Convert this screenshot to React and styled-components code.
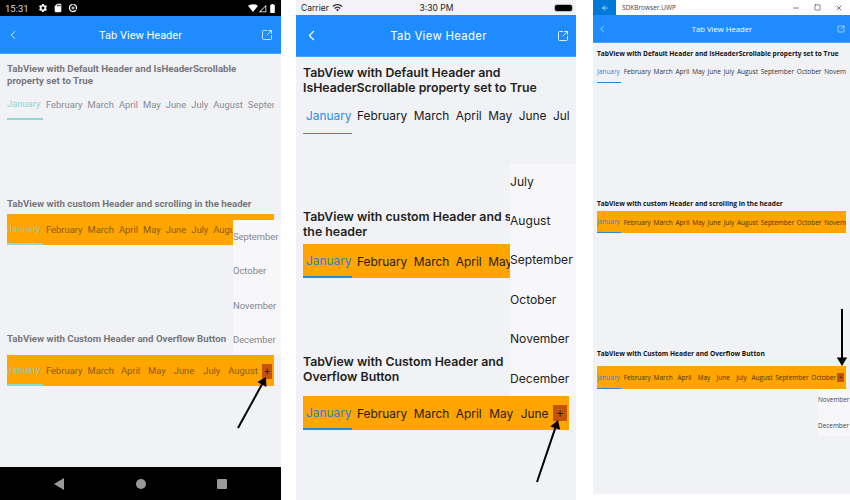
import styled, { createGlobalStyle } from 'styled-components'
import { ArrowLeft, ChevronLeft, Minus, Square, SquareArrowOutUpRight, X } from 'lucide-react'
import { MdBatteryFull, MdDataSaverOn, MdSdCard, MdSettings, MdSignalCellular0Bar, MdSignalWifi4Bar, MdWifi } from 'react-icons/md'

const GlobalStyle = createGlobalStyle`
  html, body { margin: 0; padding: 0; background: #fff; overflow: hidden; }
  * { box-sizing: border-box; }
`

const fonts = {
  android: 'Roboto, sans-serif',
  ios: 'Inter, "Liberation Sans", sans-serif',
  uwp: '"Open Sans", "Noto Sans", sans-serif',
}

const Page = styled.div`
  width: 850px;
  height: 500px;
  display: flex;
  align-items: flex-start;
`

const Phone = styled.div`
  position: relative;
  flex: none;
  width: ${(p) => p.$width}px;
  height: ${(p) => p.$height}px;
  margin-left: ${(p) => p.$left}px;
  display: flex;
  flex-direction: column;
  background: #f0f2f6;
  font-family: ${(p) => fonts[p.$kind]};
  overflow: hidden;
`

const AndroidStatus = styled.div`
  height: 16px;
  flex: none;
  background: #000;
  color: #d8d8d8;
  font-size: 9.5px;
  display: flex;
  align-items: center;
  gap: 5px;
  padding: 0 3px 0 5px;
`

const Clock = styled.span`
  margin-right: 4px;
`

const StatusGroup = styled.div`
  display: flex;
  align-items: center;
  color: #fff;
`

const Spacer = styled.div`
  flex: 1;
`

const AndroidNav = styled.div`
  height: 33px;
  flex: none;
  background: #000;
  display: flex;
  align-items: center;
  justify-content: space-between;
  padding: 0 54px;
`

const IosStatus = styled.div`
  height: 15px;
  flex: none;
  background: #f4f4f6;
  color: #222;
  font-size: 8.5px;
  display: grid;
  grid-template-columns: 1fr auto 1fr;
  align-items: center;
  padding: 0 4px 0 5px;
`

const Carrier = styled.div`
  display: flex;
  align-items: center;
  gap: 3px;
`

const Battery = styled.div`
  justify-self: end;
  width: 17px;
  height: 6px;
  border-radius: 2px;
  background: #000;
  box-shadow: 0 0 0 1px #bbb;
`

const UwpTitle = styled.div`
  height: 15px;
  flex: none;
  background: #fff;
  color: #444;
  font-size: 6.5px;
  display: flex;
  align-items: center;
`

const UwpBack = styled.div`
  width: 23px;
  height: 15px;
  background: #0078d7;
  color: #fff;
  display: flex;
  align-items: center;
  justify-content: center;
  margin-right: 6px;
`

const WindowButtons = styled.div`
  display: flex;
  align-items: center;
  gap: 14px;
  padding-right: 7px;
  color: #333;
`

const Header = styled.div`
  flex: none;
  height: ${(p) => p.$height}px;
  background: #1e8cff;
  color: #fff;
  font-size: ${(p) => p.$size}px;
  letter-spacing: ${(p) => p.$spacing || 0}px;
  padding: ${(p) => p.$pad};
  display: flex;
  align-items: center;
  justify-content: space-between;
  border-bottom: 1px solid #4aa3ff;
`

const HeaderTitle = styled.div`
  font-weight: 400;
`

const Content = styled.div`
  flex: 1;
  min-height: 0;
  padding: 0 ${(p) => p.$pad}px;
`

const Section = styled.section`
  height: ${(p) => p.$height}px;
  padding-top: ${(p) => p.$top}px;
`

const Title = styled.h2`
  margin: 0;
  font-size: ${(p) => p.$size}px;
  line-height: ${(p) => p.$line}px;
  font-weight: ${(p) => p.$weight};
  color: ${(p) => p.$color};
  height: ${(p) => p.$box}px;
  white-space: pre;
`

const Strip = styled.div`
  display: flex;
  height: ${(p) => p.$height}px;
  background: ${(p) => (p.$orange ? '#ffa500' : 'transparent')};
  overflow: hidden;
  font-size: ${(p) => p.$size}px;
  gap: ${(p) => p.$gap}px;
  align-items: stretch;
  position: relative;
`

const Tab = styled.div`
  flex: none;
  display: flex;
  align-items: center;
  white-space: nowrap;
  color: ${(p) => p.$color};
  min-width: ${(p) => p.$min || 0}px;
  margin-left: ${(p) => p.$shift || 0}px;
  padding-left: ${(p) => p.$inset || 0}px;
  border-bottom: ${(p) => (p.$line ? `${p.$thick || 1}px solid ${p.$line}` : 'none')};
`

const PlusButton = styled.div`
  position: absolute;
  right: ${(p) => p.$right}px;
  top: ${(p) => p.$top}px;
  width: ${(p) => p.$box}px;
  height: ${(p) => p.$boxH}px;
  background: #c4540a;
  color: #222;
  font-size: ${(p) => p.$size}px;
  line-height: 1;
  display: flex;
  align-items: center;
  justify-content: center;
`

const Popup = styled.div`
  position: absolute;
  left: ${(p) => p.$left}px;
  top: ${(p) => p.$top}px;
  width: ${(p) => p.$width}px;
  height: ${(p) => p.$height}px;
  overflow: hidden;
  background: #f7f7f9;
  color: ${(p) => p.$color};
  font-size: ${(p) => p.$size}px;
  display: flex;
  flex-direction: column;
`

const PopupItem = styled.div`
  height: ${(p) => p.$height}px;
  flex: none;
  padding-bottom: ${(p) => p.$lift}px;
  display: flex;
  align-items: center;
  white-space: nowrap;
`

const Arrow = styled.svg`
  position: absolute;
  left: 0;
  top: 0;
  pointer-events: none;
`

const months = ['January', 'February', 'March', 'April', 'May', 'June', 'July', 'August', 'September', 'October', 'November', 'December']

function Tabs({ names, color, accent, line, min, inset, thick, shifts = {} }) {
  return names.map((name, i) => (
    <Tab
      key={name}
      $color={i === 0 ? accent : color}
      $line={i === 0 ? line : null}
      $min={i === 0 ? min : 0}
      $inset={i === 0 ? inset : 0}
      $thick={thick}
      $shift={shifts[name]}
    >
      {name}
    </Tab>
  ))
}

function ArrowMark({ x1, y1, x2, y2 }) {
  const width = Math.max(x1, x2) + 12
  const height = Math.max(y1, y2) + 12
  const angle = Math.atan2(y2 - y1, x2 - x1)
  const head = (a, r) => `${x2 + Math.cos(a) * r},${y2 + Math.sin(a) * r}`
  return (
    <Arrow width={width} height={height}>
      <line x1={x1} y1={y1} x2={x2 - Math.cos(angle) * 6} y2={y2 - Math.sin(angle) * 6} stroke="#000" strokeWidth="2" />
      <polygon points={`${x2},${y2} ${head(angle + 2.6, 10)} ${head(angle - 2.6, 10)}`} fill="#000" />
    </Arrow>
  )
}

function AndroidPhone() {
  const tab = { color: '#8a8a90', accent: '#8fd8cc', line: '#8fd8cc', min: 36, thick: 2 }
  const darkTab = { ...tab, color: '#8a5a10', accent: '#8fc7b8' }
  const title = { $size: 9.7, $line: 12, $weight: 700, $color: '#77777c' }
  const strip = { $height: 31, $size: 9.4, $gap: 5 }
  return (
    <Phone $kind="android" $width={281} $height={500} $left={0}>
      <AndroidStatus>
        <Clock>15:31</Clock>
        <MdSettings size={10} color="#fff" />
        <MdSdCard size={10} color="#fff" />
        <MdDataSaverOn size={10} color="#fff" />
        <Spacer />
        <StatusGroup>
          <MdSignalWifi4Bar size={10} />
          <MdSignalCellular0Bar size={9} />
          <MdBatteryFull size={11} />
        </StatusGroup>
      </AndroidStatus>
      <Header $height={38} $size={11} $pad="1px 8px 0 6px">
        <ChevronLeft size={14} strokeWidth={1.5} />
        <HeaderTitle>Tab View Header</HeaderTitle>
        <SquareArrowOutUpRight size={12} strokeWidth={1.5} />
      </Header>
      <Content $pad={7}>
        <Section $height={144} $top={9}>
          <Title {...title} $box={26}>{'TabView with Default Header and IsHeaderScrollable\nproperty set to True'}</Title>
          <Strip {...strip}>
            <Tabs names={months} {...tab} shifts={{ February: -2 }} />
          </Strip>
        </Section>
        <Section $height={135} $top={0}>
          <Title {...title} $box={16}>TabView with custom Header and scrolling in the header</Title>
          <Strip $orange {...strip}>
            <Tabs names={months} {...darkTab} shifts={{ February: -2 }} />
          </Strip>
        </Section>
        <Section $height={100} $top={0}>
          <Title {...title} $box={22}>TabView with Custom Header and Overflow Button</Title>
          <Strip $orange {...strip}>
            <Tabs names={months.slice(0, 8)} {...darkTab} shifts={{ February: -2, April: 2, May: 3, June: 3, July: 4, August: 3 }} />
            <PlusButton $right={2} $top={9} $box={10} $boxH={15} $size={10}>+</PlusButton>
          </Strip>
        </Section>
      </Content>
      <AndroidNav>
        <svg width="10" height="12" viewBox="0 0 10 12"><path d="M10 0v12L0 6z" fill="#999" /></svg>
        <svg width="10" height="10" viewBox="0 0 10 10"><circle cx="5" cy="5" r="5" fill="#999" /></svg>
        <svg width="10" height="10" viewBox="0 0 10 10"><rect width="10" height="10" rx="1" fill="#999" /></svg>
      </AndroidNav>
      <Popup $left={233} $top={220} $width={48} $height={134} $color="#85858a" $size={9.4}>
        {months.slice(8).map((m) => <PopupItem key={m} $height={34.5} $lift={2}>{m}</PopupItem>)}
      </Popup>
      <ArrowMark x1={238} y1={428} x2={266} y2={377} />
    </Phone>
  )
}

function IosPhone() {
  const tab = { color: '#1a1a1a', accent: '#2b8ce8', line: '#2b8ce8', min: 49, inset: 3, thick: 1 }
  const darkTab = { ...tab, color: '#2a1a00', accent: '#2b84d8', line: '#3a86c8', thick: 2 }
  const title = { $size: 12.3, $line: 15, $weight: 600, $color: '#1f1f22' }
  const strip = { $size: 11.9, $gap: 6.5 }
  return (
    <Phone $kind="ios" $width={280} $height={500} $left={15}>
      <IosStatus>
        <Carrier>Carrier <MdWifi size={11} /></Carrier>
        <span>3:30 PM</span>
        <Battery />
      </IosStatus>
      <Header $height={42} $size={11.4} $spacing={0.3} $pad="0 7px 0 7px">
        <ChevronLeft size={17} strokeWidth={1.5} />
        <HeaderTitle>Tab View Header</HeaderTitle>
        <SquareArrowOutUpRight size={12} strokeWidth={1.7} />
      </Header>
      <Content $pad={7}>
        <Section $height={145} $top={8}>
          <Title {...title} $box={32}>{'TabView with Default Header and\nIsHeaderScrollable property set to True'}</Title>
          <Strip {...strip} $height={37}>
            <Tabs names={months} {...tab} shifts={{ February: -1.5 }} />
          </Strip>
        </Section>
        <Section $height={145} $top={7}>
          <Title {...title} $box={35}>{'TabView with custom Header and scrolling in\nthe header'}</Title>
          <Strip $orange {...strip} $height={34}>
            <Tabs names={months} {...darkTab} shifts={{ February: -1.5 }} />
          </Strip>
        </Section>
        <Section $height={111} $top={7}>
          <Title {...title} $box={42}>{'TabView with Custom Header and\nOverflow Button'}</Title>
          <Strip $orange {...strip} $height={34}>
            <Tabs names={months.slice(0, 6)} {...darkTab} shifts={{ February: -1.5, May: 1, June: 1 }} />
            <PlusButton $right={2} $top={9} $box={14} $boxH={16} $size={12}>+</PlusButton>
          </Strip>
        </Section>
      </Content>
      <Popup $left={214} $top={164} $width={66} $height={232} $color="#222" $size={12.1}>
        {months.slice(6).map((m) => <PopupItem key={m} $height={39.4} $lift={5}>{m}</PopupItem>)}
      </Popup>
      <ArrowMark x1={241} y1={482} x2={262} y2={420} />
    </Phone>
  )
}

function UwpPhone() {
  const tab = { color: '#333', accent: '#1e8ce0', line: '#1e8ce0', min: 24, thick: 1 }
  const darkTab = { ...tab, color: '#4a3000', accent: '#2f88c8' }
  const title = { $size: 6.6, $line: 9, $weight: 700, $color: '#111' }
  const strip = { $size: 6.5, $gap: 2.7 }
  return (
    <Phone $kind="uwp" $width={257} $height={494} $left={17}>
      <UwpTitle>
        <UwpBack><ArrowLeft size={8} /></UwpBack>
        SDKBrowser.UWP
        <Spacer />
        <WindowButtons>
          <Minus size={8} />
          <Square size={7} />
          <X size={8} />
        </WindowButtons>
      </UwpTitle>
      <Header $height={28} $size={7.7} $pad="1px 5px 0 4px">
        <ChevronLeft size={10} strokeWidth={1.5} />
        <HeaderTitle>Tab View Header</HeaderTitle>
        <SquareArrowOutUpRight size={8} strokeWidth={1.7} />
      </Header>
      <Content $pad={4}>
        <Section $height={156} $top={6}>
          <Title {...title} $box={11}>TabView with Default Header and IsHeaderScrollable property set to True</Title>
          <Strip {...strip} $height={23}>
            <Tabs names={months} {...tab} />
          </Strip>
        </Section>
        <Section $height={147} $top={0}>
          <Title {...title} $box={12}>TabView with custom Header and scrolling in the header</Title>
          <Strip $orange {...strip} $height={22}>
            <Tabs names={months} {...darkTab} />
          </Strip>
        </Section>
        <Section $height={100} $top={3}>
          <Title {...title} $box={17}>TabView with Custom Header and Overflow Button</Title>
          <Strip $orange {...strip} $height={23}>
            <Tabs names={months.slice(0, 10)} {...darkTab} shifts={{ April: 2, May: 3.5, June: 3.5, July: 3.5, August: 2 }} />
            <PlusButton $right={2} $top={7} $box={7} $boxH={9} $size={7}>+</PlusButton>
          </Strip>
        </Section>
      </Content>
      <Popup $left={225} $top={389} $width={32} $height={47} $color="#444" $size={6.4}>
        {months.slice(10).map((m) => <PopupItem key={m} $height={25.5} $lift={4}>{m}</PopupItem>)}
      </Popup>
      <ArrowMark x1={249} y1={309} x2={249} y2={366} />
    </Phone>
  )
}

export default function App() {
  return (
    <Page>
      <GlobalStyle />
      <AndroidPhone />
      <IosPhone />
      <UwpPhone />
    </Page>
  )
}
